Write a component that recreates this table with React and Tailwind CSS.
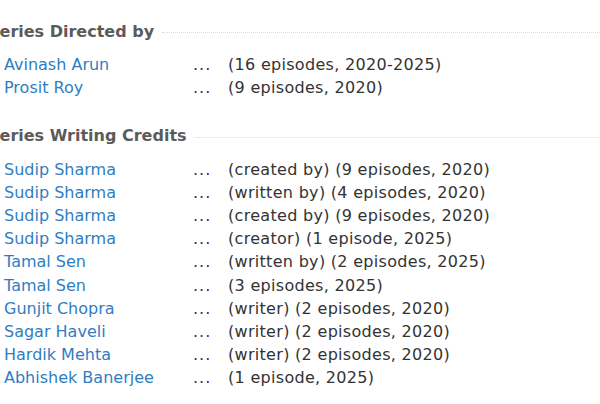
import React from 'react';

const directors = [
  { name: 'Avinash Arun', info: '(16 episodes, 2020-2025)' },
  { name: 'Prosit Roy', info: '(9 episodes, 2020)' },
];

const writers = [
  { name: 'Sudip Sharma', info: '(created by) (9 episodes, 2020)' },
  { name: 'Sudip Sharma', info: '(written by) (4 episodes, 2020)' },
  { name: 'Sudip Sharma', info: '(created by) (9 episodes, 2020)' },
  { name: 'Sudip Sharma', info: '(creator) (1 episode, 2025)' },
  { name: 'Tamal Sen', info: '(written by) (2 episodes, 2025)' },
  { name: 'Tamal Sen', info: '(3 episodes, 2025)' },
  { name: 'Gunjit Chopra', info: '(writer) (2 episodes, 2020)' },
  { name: 'Sagar Haveli', info: '(writer) (2 episodes, 2020)' },
  { name: 'Hardik Mehta', info: '(writer) (2 episodes, 2020)' },
  { name: 'Abhishek Banerjee', info: '(1 episode, 2025)' },
];

const Section = ({ title, rows }) => (
  <section>
    <div className="flex items-center h-[23px] -ml-[12px]">
      <h4 className="font-bold text-[#5b5b5b] whitespace-nowrap">{title}</h4>
      <div className="flex-1 ml-[8px] border-t border-dotted border-[#d9d9d9] mt-[3px]" />
    </div>
    <div className="mt-[10.5px] pl-[4px]">
      {rows.map((row, i) => (
        <div key={i} className="flex h-[23.2px] items-center whitespace-nowrap">
          <a href="#" className="w-[189px] text-[#2f7dc2]">{row.name}</a>
          <span className="w-[35px] text-[#333] tracking-[1px]">...</span>
          <span className="text-[#333] tracking-[0.3px]">{row.info}</span>
        </div>
      ))}
    </div>
  </section>
);

export default function App() {
  return (
    <div
      className="w-[600px] h-[404px] overflow-hidden bg-white pt-[19.5px] text-[16px] leading-[23px]"
      style={{ fontFamily: '"DejaVu Sans", Verdana, sans-serif' }}
    >
      <Section title="Series Directed by" rows={directors} />
      <div className="h-[24.7px]" />
      <Section title="Series Writing Credits" rows={writers} />
    </div>
  );
}
